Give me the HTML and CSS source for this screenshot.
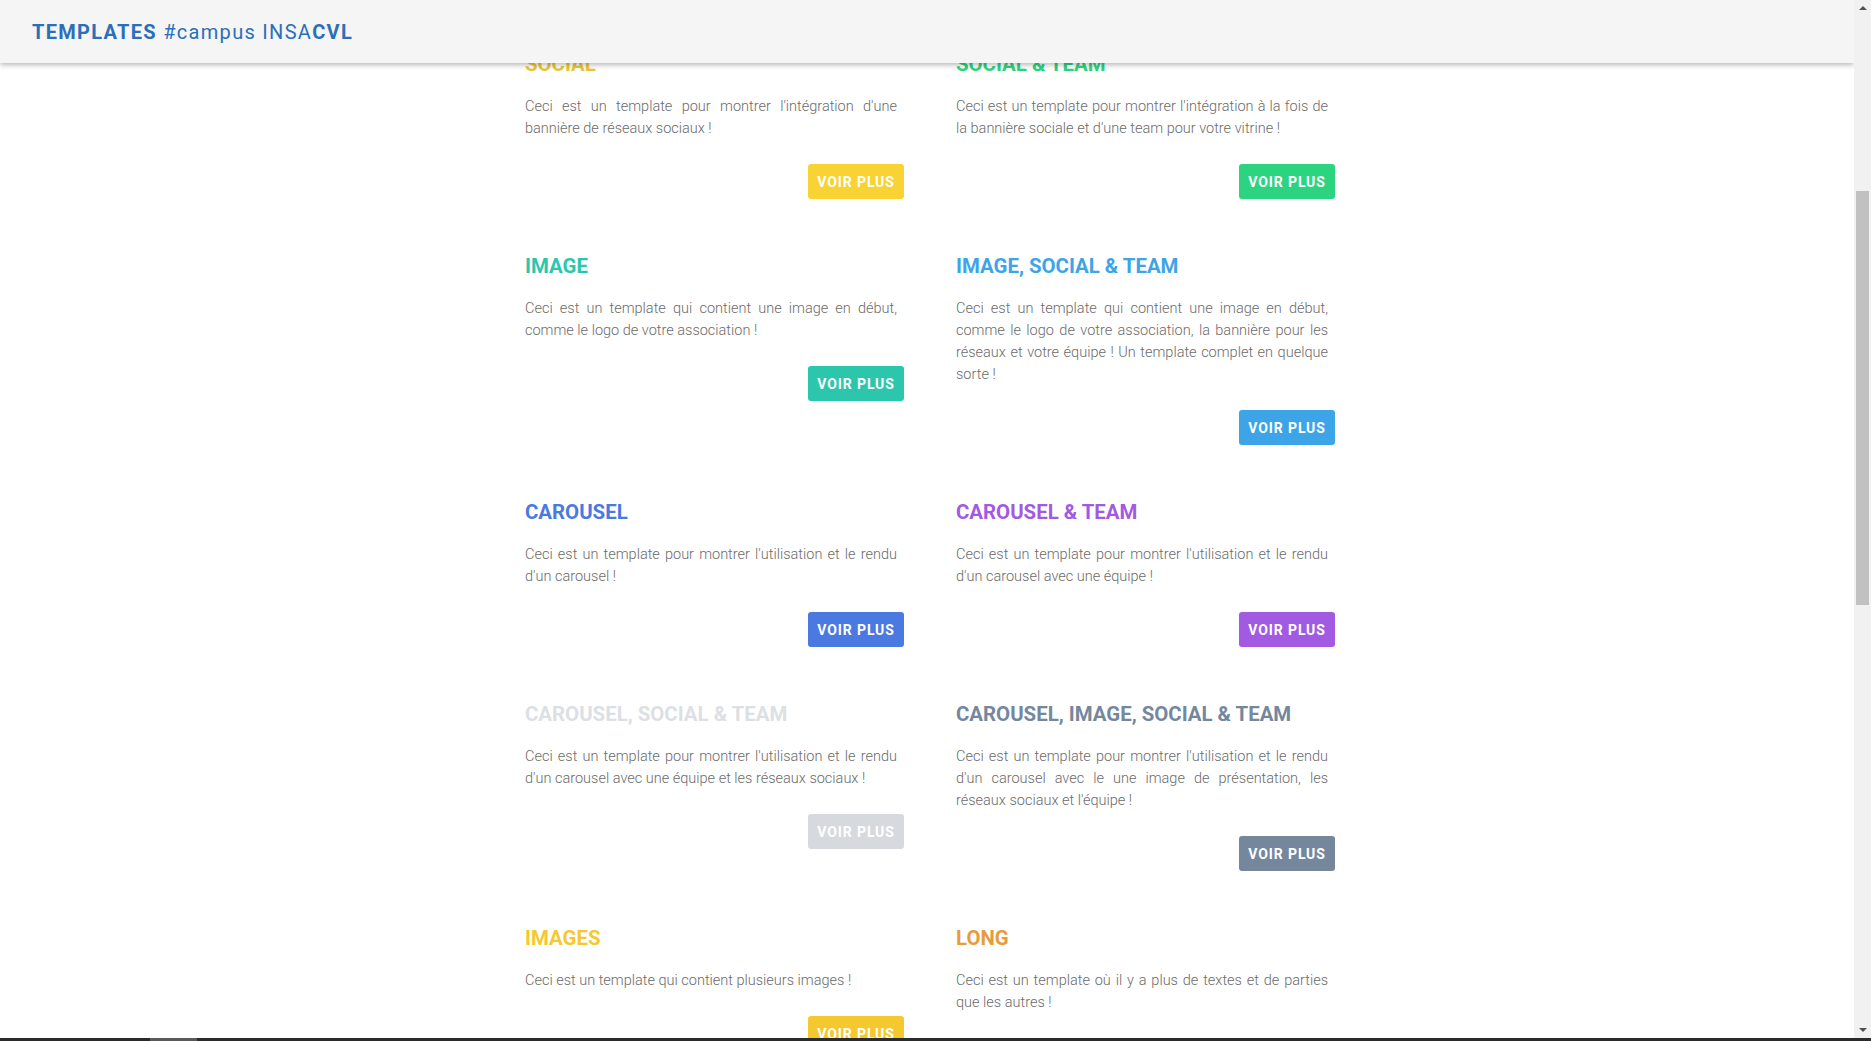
FILE: index.html
```html
<!DOCTYPE html>
<html lang="fr">
<head>
<meta charset="utf-8">
<title>Templates #campus INSACVL</title>
<link rel="stylesheet" href="styles.css">
</head>
<body>
<div class="viewport">
  <div class="page">
    <main class="grid">
      <section class="card c-social">
        <h2 class="card-title">Social</h2>
        <p class="card-text">Ceci est un template pour montrer l'intégration d'une bannière de réseaux sociaux !</p>
        <a class="btn">Voir plus</a>
      </section>
      <section class="card c-social-team">
        <h2 class="card-title">Social &amp; Team</h2>
        <p class="card-text">Ceci est un template pour montrer l'intégration à la fois de la bannière sociale et d'une team pour votre vitrine !</p>
        <a class="btn">Voir plus</a>
      </section>
      <section class="card c-image">
        <h2 class="card-title">Image</h2>
        <p class="card-text">Ceci est un template qui contient une image en début, comme le logo de votre association !</p>
        <a class="btn">Voir plus</a>
      </section>
      <section class="card c-image-social-team">
        <h2 class="card-title">Image, Social &amp; Team</h2>
        <p class="card-text">Ceci est un template qui contient une image en début, comme le logo de votre association, la bannière pour les réseaux et votre équipe ! Un template complet en quelque sorte !</p>
        <a class="btn">Voir plus</a>
      </section>
      <section class="card c-carousel">
        <h2 class="card-title">Carousel</h2>
        <p class="card-text">Ceci est un template pour montrer l'utilisation et le rendu d'un carousel !</p>
        <a class="btn">Voir plus</a>
      </section>
      <section class="card c-carousel-team">
        <h2 class="card-title">Carousel &amp; Team</h2>
        <p class="card-text">Ceci est un template pour montrer l'utilisation et le rendu d'un carousel avec une équipe !</p>
        <a class="btn">Voir plus</a>
      </section>
      <section class="card c-carousel-social-team">
        <h2 class="card-title">Carousel, Social &amp; Team</h2>
        <p class="card-text">Ceci est un template pour montrer l'utilisation et le rendu d'un carousel avec une équipe et les réseaux sociaux !</p>
        <a class="btn">Voir plus</a>
      </section>
      <section class="card c-carousel-all">
        <h2 class="card-title">Carousel, Image, Social &amp; Team</h2>
        <p class="card-text">Ceci est un template pour montrer l'utilisation et le rendu d'un carousel avec le une image de présentation, les réseaux sociaux et l'équipe !</p>
        <a class="btn">Voir plus</a>
      </section>
      <section class="card c-images">
        <h2 class="card-title">Images</h2>
        <p class="card-text">Ceci est un template qui contient plusieurs images !</p>
        <a class="btn">Voir plus</a>
      </section>
      <section class="card c-long">
        <h2 class="card-title">Long</h2>
        <p class="card-text">Ceci est un template où il y a plus de textes et de parties que les autres !</p>
        <a class="btn">Voir plus</a>
      </section>
    </main>
    <header class="topbar">
      <span class="brand"><b>TEMPLATES</b> #campus INSA<b>CVL</b></span>
    </header>
  </div>
  <div class="vscroll">
    <div class="arrow arrow-up"></div>
    <div class="track"><div class="thumb"></div></div>
    <div class="arrow arrow-down"></div>
  </div>
</div>
<div class="hbar"><div class="hbar-seg"></div></div>
</body>
</html>
```
FILE: styles.css
```css
* { box-sizing: border-box; }

html, body {
  margin: 0;
  padding: 0;
  height: 1041px;
  overflow: hidden;
  background: #ffffff;
  font-family: Roboto, "Liberation Sans", Arial, sans-serif;
}

.viewport {
  display: flex;
  height: 1038px;
}

.page {
  position: relative;
  flex: 1;
  overflow: hidden;
  background: #ffffff;
}

.topbar {
  position: absolute;
  top: 0;
  left: 0;
  right: 0;
  height: 63px;
  background: #f5f5f5;
  box-shadow: 0 2px 5px rgba(0, 0, 0, 0.28);
  display: flex;
  align-items: center;
  padding-left: 32px;
  z-index: 2;
}

.brand {
  font-size: 20px;
  letter-spacing: 1.3px;
  color: #2b6fb9;
  font-weight: 400;
  padding-top: 1px;
}

.brand b { font-weight: 700; }

.grid {
  display: grid;
  grid-template-columns: 379px 379px;
  column-gap: 52px;
  row-gap: 55px;
  justify-content: center;
  align-items: start;
  padding-top: 52px;
  padding-left: 6px;
}

.card {
  display: flex;
  flex-direction: column;
}

.card-title {
  margin: 0 0 20px;
  font-size: 20.4px;
  line-height: 24px;
  font-weight: 700;
  text-transform: uppercase;
  color: var(--c);
}

.card-text {
  margin: 0 7px 24px 0;
  font-size: 14.5px;
  line-height: 22px;
  font-weight: 300;
  color: #6b6b6b;
  text-align: justify;
  letter-spacing: 0;
}

.btn {
  align-self: flex-end;
  width: 96px;
  height: 35px;
  border-radius: 3px;
  background: var(--c);
  color: #ffffff;
  font-size: 14px;
  font-weight: 700;
  letter-spacing: 0.9px;
  text-transform: uppercase;
  display: flex;
  align-items: center;
  justify-content: center;
}

.c-social { --c: #f9d233; }
.c-social-team { --c: #2dd47f; }
.c-image { --c: #2cc6ad; }
.c-image-social-team { --c: #3ea4e8; }
.c-carousel { --c: #4a79e2; }
.c-carousel-team { --c: #a25ae2; }
.c-carousel-social-team { --c: #d6dadf; }
.c-carousel-all { --c: #74879d; }
.c-images { --c: #f5c82f; }
.c-long { --c: #e89b3a; }

.c-social .card-title { color: #e9c63a; }
.c-carousel-social-team .card-title { color: #dcdfe3; }

.vscroll {
  width: 17px;
  background: #f1f1f1;
  display: flex;
  flex-direction: column;
  align-items: center;
}

.arrow {
  width: 0;
  height: 0;
  border-left: 4px solid transparent;
  border-right: 4px solid transparent;
  margin: 6px 0;
}

.arrow-up { border-bottom: 4px solid #505050; }
.arrow-down { border-top: 4px solid #505050; }

.track {
  flex: 1;
  width: 100%;
  padding: 0 2px;
}

.thumb {
  margin-top: 175px;
  height: 414px;
  background: #c1c1c1;
}

.hbar {
  height: 3px;
  background: #2b2b2b;
  padding-left: 150px;
}

.hbar-seg {
  width: 47px;
  height: 3px;
  background: #5a5a5a;
}
```
